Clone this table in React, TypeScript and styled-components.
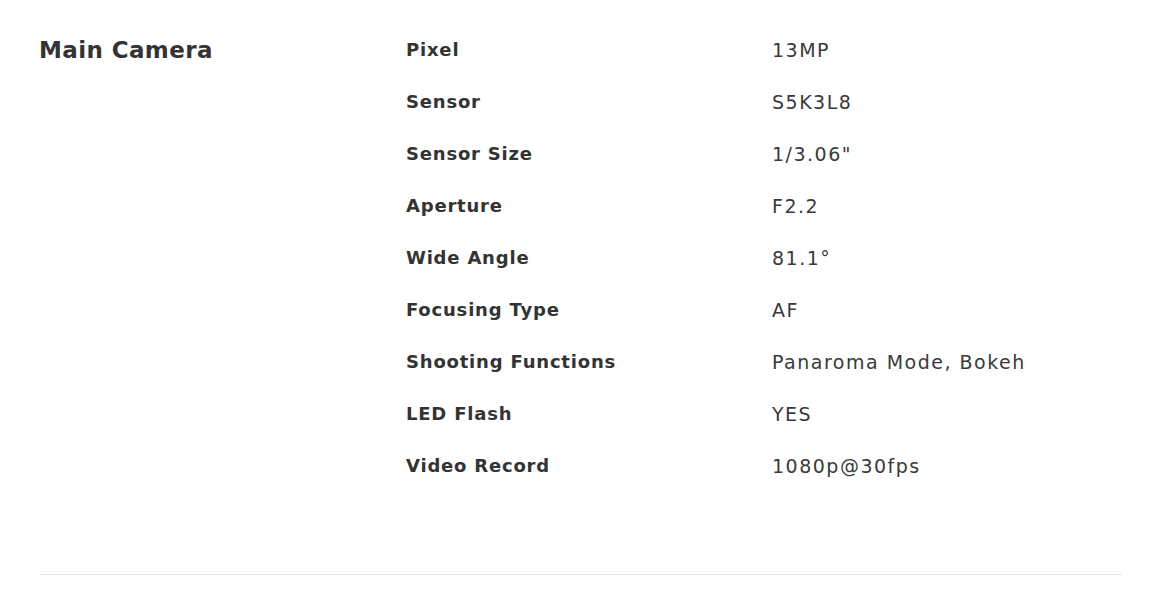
import React from "react";
import styled, { createGlobalStyle } from "styled-components";

const specs = [
  { name: "Pixel", value: "13MP" },
  { name: "Sensor", value: "S5K3L8" },
  { name: "Sensor Size", value: '1/3.06"' },
  { name: "Aperture", value: "F2.2" },
  { name: "Wide Angle", value: "81.1°" },
  { name: "Focusing Type", value: "AF" },
  { name: "Shooting Functions", value: "Panaroma Mode, Bokeh" },
  { name: "LED Flash", value: "YES" },
  { name: "Video Record", value: "1080p@30fps" },
];

const GlobalStyle = createGlobalStyle`
  body {
    margin: 0;
    background: #fff;
    font-family: "DejaVu Sans", "Open Sans", sans-serif;
    color: #333;
  }
`;

const Section = styled.section`
  margin: 0 28px 0 39px;
  padding-top: 38px;
  padding-bottom: 96px;
  display: grid;
  grid-template-columns: 367px 366px 1fr;
  border-bottom: 1px solid #e6e6e6;
`;

const Title = styled.h2`
  margin: 0;
  font-size: 23px;
  font-weight: 600;
  line-height: 24px;
  letter-spacing: 0.4px;
  color: #333;
`;

const Table = styled.dl`
  grid-column: 2 / 4;
  margin: 0;
  display: grid;
  grid-template-columns: 366px 1fr;
  row-gap: 28px;
`;

const Key = styled.dt`
  font-size: 18px;
  font-weight: 700;
  line-height: 24px;
  letter-spacing: 0.8px;
  color: #333;
`;

const Value = styled.dd`
  margin: 0;
  font-size: 19px;
  font-weight: 400;
  line-height: 24px;
  letter-spacing: 1.5px;
  color: #3a3a3a;
`;

const App = () => {
  return (
    <>
      <GlobalStyle />
      <Section>
        <Title>Main Camera</Title>
        <Table>
          {specs.map((item, idx) => (
            <React.Fragment key={idx}>
              <Key>{item.name}</Key>
              <Value>{item.value}</Value>
            </React.Fragment>
          ))}
        </Table>
      </Section>
    </>
  );
};

export default App;
